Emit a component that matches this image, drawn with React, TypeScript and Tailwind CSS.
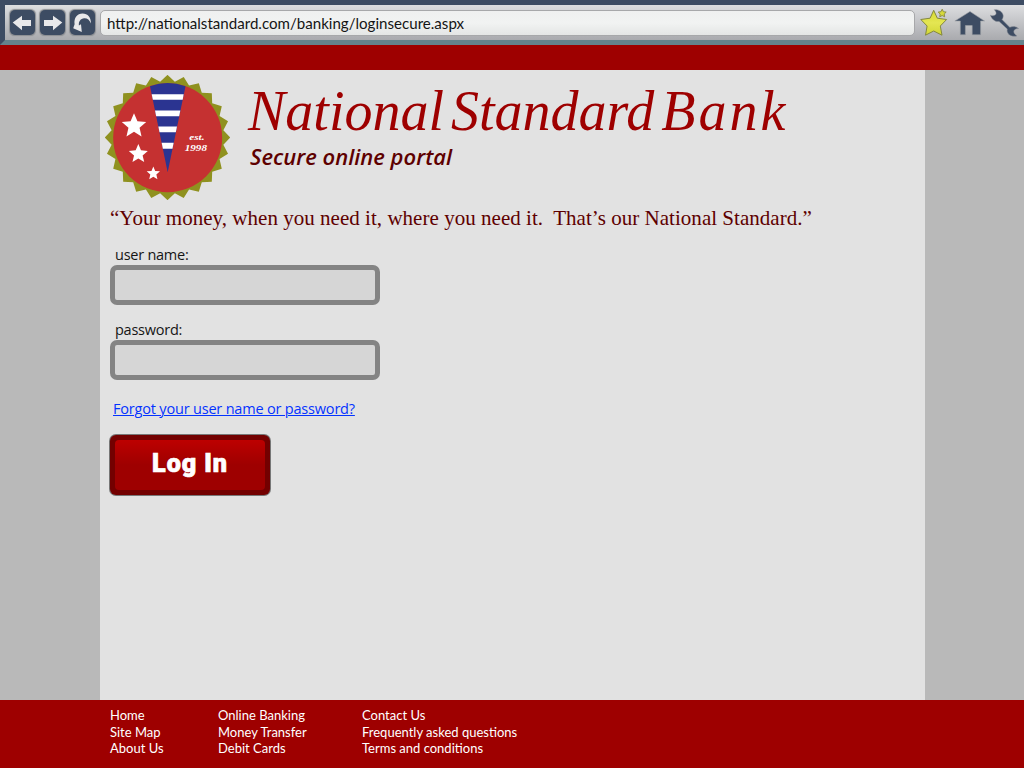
import type { ReactNode } from "react";

function points(cx: number, cy: number, outer: number, inner: number, count: number) {
  const list: string[] = [];
  for (let i = 0; i < count * 2; i++) {
    const r = i % 2 === 0 ? outer : inner;
    const a = (Math.PI * i) / count - Math.PI / 2;
    list.push(`${(cx + r * Math.cos(a)).toFixed(2)},${(cy + r * Math.sin(a)).toFixed(2)}`);
  }
  return list.join(" ");
}

function NavButton({ label, children }: { label: string; children: ReactNode }) {
  return (
    <button
      aria-label={label}
      className="size-[25px] shrink-0 rounded-[5px] bg-[#3d4c63] shadow-[0_0_1px_0.5px_#8b8e92]"
    >
      <svg viewBox="0 0 25 25" className="size-[25px]" fill="#e8e8ea">
        {children}
      </svg>
    </button>
  );
}

function BrowserBar() {
  return (
    <header className="h-[45px] border-t-5 border-b-5 border-l-5 border-t-[#3d4c63] border-b-[#64838d] border-l-[#3d4c63] bg-[#b0b1b5]">
      <div className="flex h-[35px] items-start bg-linear-to-b from-[#dddee0] to-[#a9aaae] pt-[5px] pl-[5px]">
        <div className="flex gap-[5px]">
          <NavButton label="Back">
            <path d="M2.7 12.6 12 5.7v4.3h9v6h-9v4.2z" />
          </NavButton>
          <NavButton label="Forward">
            <path d="M22.3 12.6 13 5.7v4.3H4v6h9v4.2z" />
          </NavButton>
          <NavButton label="Reload">
            <path d="M20.8 13.4C21.400 7.600 17.600 3.500 12.600 3.500 7.200 3.500 3.700 8 4.600 14.200L3.200 18.300 11.800 21.900 11 14.300 8.900 15.400C8.500 11.400 10.600 8.500 14.200 8.300 17.200 8.100 19.600 10 20.800 13.400z" />
          </NavButton>
        </div>
        <div className="ml-[5px] flex h-[26px] w-[815px] items-center rounded-[5px] border border-[#a7a8aa] bg-linear-to-b from-[#eff0f0] via-[#f1f3f2] to-[#e4e6e5] pl-[6px] font-['Lato',sans-serif] text-[15.1px] text-[#151515]">
          http://nationalstandard.com/banking/loginsecure.aspx
        </div>
        <svg viewBox="0 0 104 35" className="-mt-[5px] h-[35px] w-[104px] shrink-0">
          <defs>
            <linearGradient id="gold" x1="0" y1="0" x2="0" y2="1">
              <stop offset="0" stopColor="#d6d92f" />
              <stop offset="0.5" stopColor="#e4e653" />
              <stop offset="1" stopColor="#d2d634" />
            </linearGradient>
          </defs>
          <polygon
            points="18.7,5.3 22.3,13.2 31.6,14.5 25.300,21 27,30.200 18.700,26 10.500,30.200 12.100,21 5.800,14.500 15.100,13.200"
            fill="url(#gold)"
            stroke="#84883f"
            strokeLinejoin="round"
          />
          <polygon
            points={points(27.2, 8.4, 4.2, 2.1, 5)}
            fill="#d6d93a"
            stroke="#84883f"
            strokeWidth="0.9"
            strokeLinejoin="round"
          />
          <path
            d="M55 6.500 69.500 16H65.600V29.800H57.200V20.500H50.400V29.800H45.300V16H39.900z"
            fill="#3d4c63"
            stroke="#9a9da2"
            strokeWidth="0.6"
          />
          <path
            d="M75.400 10.200C77.500 11 79.500 10.900 80.700 9.600 81.500 8.300 81.100 6.400 79.200 4.800 83.600 4.200 87.700 6.600 88.200 10.500 88.300 12 87.800 13.500 87 14.600L94.700 22.300C98 20.900 101.500 21.500 103.700 23.600 100.800 23.300 98.800 24.800 98.800 26.700 98.900 28.600 100.200 29.600 102 30.900 97.800 32 93 30.400 92.200 26.400 92 25.400 92.100 24.700 92.300 24.100L84.100 16.400C80.600 17.200 76.700 14.500 75.400 10.200z"
            fill="#3d4c63"
            stroke="#8d9198"
            strokeWidth="0.5"
          />
        </svg>
      </div>
    </header>
  );
}

function Seal() {
  return (
    <svg viewBox="20.500 20.500 375 375" className="size-[125px] shrink-0" role="img" aria-label="Seal">
      <polygon points={points(208, 208, 188, 169, 24)} fill="#8f911f" />
      <circle cx="208.500" cy="208.500" r="163.500" fill="#c53131" />
      <path d="M155.500 54A164 164 0 0 1 262 54L208.500 312z" fill="#2b3491" />
      <g fill="#fff">
        <path d="M160.500 78H256.500L253.500 94.500H164z" />
        <path d="M170.500 127H246.500L243 144H174z" />
        <path d="M180.500 175H236.500L233 192.500H184z" />
        <path d="M190.500 224H226.500L223 241.500H194z" />
        <polygon points={points(107.500, 173.500, 38.5, 17.5, 5)} />
        <polygon points={points(120.500, 257.500, 30, 13.5, 5)} />
        <polygon points={points(165.500, 316, 21, 9.5, 5)} />
      </g>
      <g
        fill="#fff"
        textAnchor="middle"
        className="font-['Liberation_Serif',serif] text-[27px] font-bold italic"
      >
        <text x="296" y="217" textLength="46" lengthAdjust="spacingAndGlyphs">est.</text>
        <text x="293" y="248" textLength="67" lengthAdjust="spacingAndGlyphs">1998</text>
      </g>
    </svg>
  );
}

function Field({ id, label, type }: { id: string; label: string; type: string }) {
  return (
    <div className="flex h-[75px] flex-col">
      <label
        htmlFor={id}
        className="h-[20px] pl-[5px] font-['Open_Sans',sans-serif] text-[14.5px] leading-[20px] tracking-[-0.25px] text-[#151515]"
      >
        {label}
      </label>
      <input
        id={id}
        type={type}
        className="h-[40px] w-[270px] rounded-[7px] border-5 border-[#848484] bg-[#d6d6d6] px-2 shadow-none outline-none"
      />
    </div>
  );
}

const footerColumns = [
  { width: "w-[108px]", links: ["Home", "Site Map", "About Us"] },
  { width: "w-[144px]", links: ["Online Banking", "Money Transfer", "Debit Cards"] },
  { width: "w-[200px]", links: ["Contact Us", "Frequently asked questions", "Terms and conditions"] },
];

export default function App() {
  return (
    <div className="flex h-[768px] w-[1024px] flex-col overflow-hidden bg-[#b9b9b9]">
      <BrowserBar />
      <div className="h-[25px] bg-[#9e0000]" />
      <main className="ml-[100px] h-[630px] w-[825px] bg-[#e2e2e2]">
        <div className="flex h-[135px] pt-[5px] pl-[5px]">
          <Seal />
          <div className="pt-[5px] pl-[18px]">
            <h1 className="h-[63px] font-['Liberation_Serif',serif] text-[56px] leading-[63px] whitespace-nowrap text-[#9e0000] italic [word-spacing:-7px]">
              National Standard <span className="tracking-[3px]">Bank</span>
            </h1>
            <p className="pl-[2px] font-['Open_Sans',sans-serif] text-[22px] leading-[26px] font-semibold text-[#5e0000] italic">
              Secure online portal
            </p>
          </div>
        </div>
        <p className="h-[40px] pl-[10px] font-['Liberation_Serif',serif] text-[21px] leading-[27px] tracking-[0.03px] whitespace-pre text-[#5e0000]">
          {"“Your money, when you need it, where you need it.  That’s our National Standard.”"}
        </p>
        <form className="flex flex-col items-start pl-[10px]" onSubmit={(e) => e.preventDefault()}>
          <Field id="user" label="user name:" type="text" />
          <Field id="password" label="password:" type="password" />
          <a
            href="#"
            className="ml-[3px] h-[40px] font-['Open_Sans',sans-serif] text-[14.5px] leading-[28px] tracking-[-0.19px] text-[#0433ff] underline decoration-1 underline-offset-[1px]"
          >
            Forgot your user name or password?
          </a>
          <button className="flex h-[60px] w-[160px] rounded-[6px] bg-[#730000] p-[5px] shadow-[0_0_0_1px_#777]">
            <span className="flex h-full w-full items-center justify-center rounded-[4px] bg-linear-to-b from-[#bd0000] to-[#9e0000] to-50% pb-[2px] font-['Roboto',sans-serif] text-[25.2px] leading-none font-black tracking-[0.9px] text-white [-webkit-text-stroke:0.7px_white]">
              Log In
            </span>
          </button>
        </form>
      </main>
      <footer className="flex h-[68px] bg-[#9e0000] pt-[7px] pl-[110px] font-['Lato',sans-serif] text-[13px] leading-[16.7px] text-white">
        {footerColumns.map((column) => (
          <ul key={column.links[0]} className={column.width}>
            {column.links.map((link) => (
              <li key={link}>
                <a href="#">{link}</a>
              </li>
            ))}
          </ul>
        ))}
      </footer>
    </div>
  );
}
